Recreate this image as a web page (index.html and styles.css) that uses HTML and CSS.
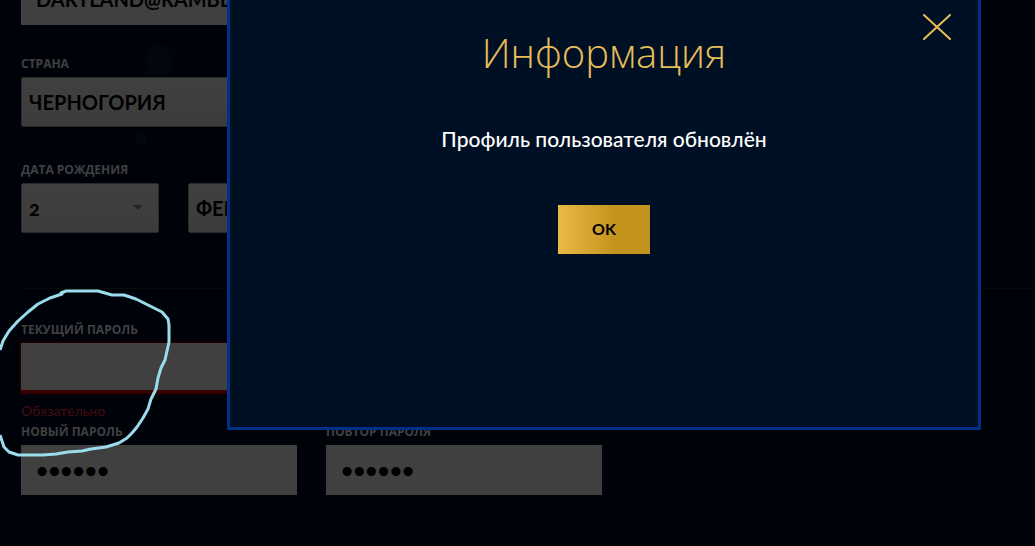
FILE: index.html
```html
<!DOCTYPE html>
<html lang="ru">
<head>
<meta charset="utf-8">
<title>Профиль</title>
<link rel="stylesheet" href="styles.css">
</head>
<body>
<form class="profile">
  <div class="row">
    <div class="field"><input class="control" type="email" aria-label="E-mail" value="DARTLAND@RAMBLER.RU"></div>
  </div>
  <div class="row row-country">
    <div class="field">
      <label class="label" for="country">СТРАНА</label>
      <select class="control select" id="country"><option>ЧЕРНОГОРИЯ</option></select>
    </div>
  </div>
  <div class="row row-birth">
    <div class="field">
      <label class="label" for="day">ДАТА РОЖДЕНИЯ</label>
      <div class="date">
        <div class="select-wrap">
          <select class="control select" id="day"><option>2</option></select>
          <svg class="arrow" viewBox="0 0 10 5" aria-hidden="true"><path d="M0 0h10L5 5z"/></svg>
        </div>
        <div class="select-wrap"><select class="control select" aria-label="Месяц"><option>ФЕВРАЛЬ</option></select></div>
      </div>
    </div>
  </div>
  <hr class="divider">
  <div class="row">
    <div class="field">
      <label class="label" for="current">ТЕКУЩИЙ ПАРОЛЬ</label>
      <input class="control invalid" type="password" id="current">
      <p class="error">Обязательно</p>
    </div>
  </div>
  <div class="row">
    <div class="field">
      <label class="label" for="new">НОВЫЙ ПАРОЛЬ</label>
      <input class="control password" type="password" id="new" value="123456">
    </div>
    <div class="field">
      <label class="label" for="repeat">ПОВТОР ПАРОЛЯ</label>
      <input class="control password" type="password" id="repeat" value="123456">
    </div>
  </div>
</form>
<div class="modal" role="dialog" aria-labelledby="modal-title">
  <button class="close" type="button" aria-label="Закрыть"><svg viewBox="0 0 28 26"><path d="M1 1l26 24M27 1L1 25"/></svg></button>
  <h1 class="modal-title" id="modal-title">Информация</h1>
  <p class="message">Профиль пользователя обновлён</p>
  <button class="ok" type="button">OK</button>
</div>
<svg class="scribble" width="180" height="180" viewBox="0 285 180 180" aria-hidden="true"><path d="M0 350L3 341L9 331L18 321L28 312L38 304L50 298L62 294L61 293L66 291H98L112 295H124L136 299L148 305L162 312L168 319L169 325V342L167 351L165 360L161 368L158 378L156 389L151 399L148 409L143 418L137 427L132 433L127 438L119 443L106 447L91 449L82 451L68 452L56 454L43 455H18L9 452L4 447L0 435"/></svg>
</body>
</html>
```
FILE: styles.css
```css
* { box-sizing: border-box; }
body {
  margin: 0;
  min-height: 100vh;
  overflow: hidden;
  font-family: Lato, "Open Sans", sans-serif;
  background:
    radial-gradient(circle at 159px 61px, #03060e 0, #03060e 10px, transparent 20px),
    radial-gradient(circle at 141px 139px, #03060e 0, #03060e 5px, transparent 7px),
    #00020a;
  border-bottom: 1px solid #000;
}
.profile { padding-left: 21px; margin-top: -25px; }
.row { display: grid; grid-template-columns: repeat(auto-fill, 276px); gap: 29px; }
.row-country { padding-top: 31px; }
.row-birth { padding-top: 35px; }
.label {
  display: block;
  height: 14px;
  margin-bottom: 7px;
  font-family: "Open Sans", sans-serif;
  font-size: 12px;
  line-height: 16px;
  font-weight: 700;
  color: #404041;
}
.control {
  display: block;
  width: 100%;
  height: 50px;
  padding: 0 15px 2px;
  border: 0;
  border-radius: 0;
  background: #404040;
  color: #000;
  font: 700 20px Lato, "Open Sans", sans-serif;
  outline: none;
}
.password { font-size: 21px; }
.select {
  appearance: none;
  padding: 0 7px;
  border: 1px solid #2a2a2b;
  border-radius: 2px;
  background: linear-gradient(#404040, #3c3c3c);
  font-variant-numeric: oldstyle-nums;
}
.date { display: grid; grid-template-columns: 138px 138px; gap: 29px; }
.select-wrap { position: relative; }
.arrow { position: absolute; right: 16px; top: 22px; width: 10px; fill: #222; }
.divider { height: 1px; margin: 55px 0 33px; border: 0; background: #090b0a; }
.invalid { box-shadow: 0 0 2px 1px #300000; border-bottom: 3px solid #380000; }
.error { margin: 8px 0 3px; font-size: 14px; line-height: 20px; color: #460b10; }
.modal {
  position: absolute;
  top: 0;
  left: 227px;
  right: 54px;
  display: flex;
  flex-direction: column;
  align-items: center;
  padding: 27px 24px 173px;
  border: 3px solid #003087;
  border-top: 0;
  background: #001024;
}
.modal-title { margin: 0; font-family: "Open Sans", sans-serif; font-size: 40px; line-height: 52px; font-weight: 300; color: #e8bd5a; }
.message { margin: 46px 0 52px; font-size: 21px; line-height: 28px; font-weight: 500; color: #fff; }
.ok {
  width: 92px;
  height: 49px;
  border: 0;
  padding: 0 0 2px;
  background: linear-gradient(90deg, #ecb946, #c4931d 62%);
  color: #000;
  font: 700 16px Lato, "Open Sans", sans-serif;
}
.close { position: absolute; top: 14px; right: 27px; width: 28px; height: 26px; padding: 0; border: 0; background: none; }
.close svg { display: block; fill: none; stroke: #e8bd5a; stroke-width: 2; stroke-linecap: round; }
.scribble { position: absolute; top: 285px; left: 0; fill: none; stroke: #9bdcec; stroke-width: 3; stroke-linejoin: round; pointer-events: none; }
```
